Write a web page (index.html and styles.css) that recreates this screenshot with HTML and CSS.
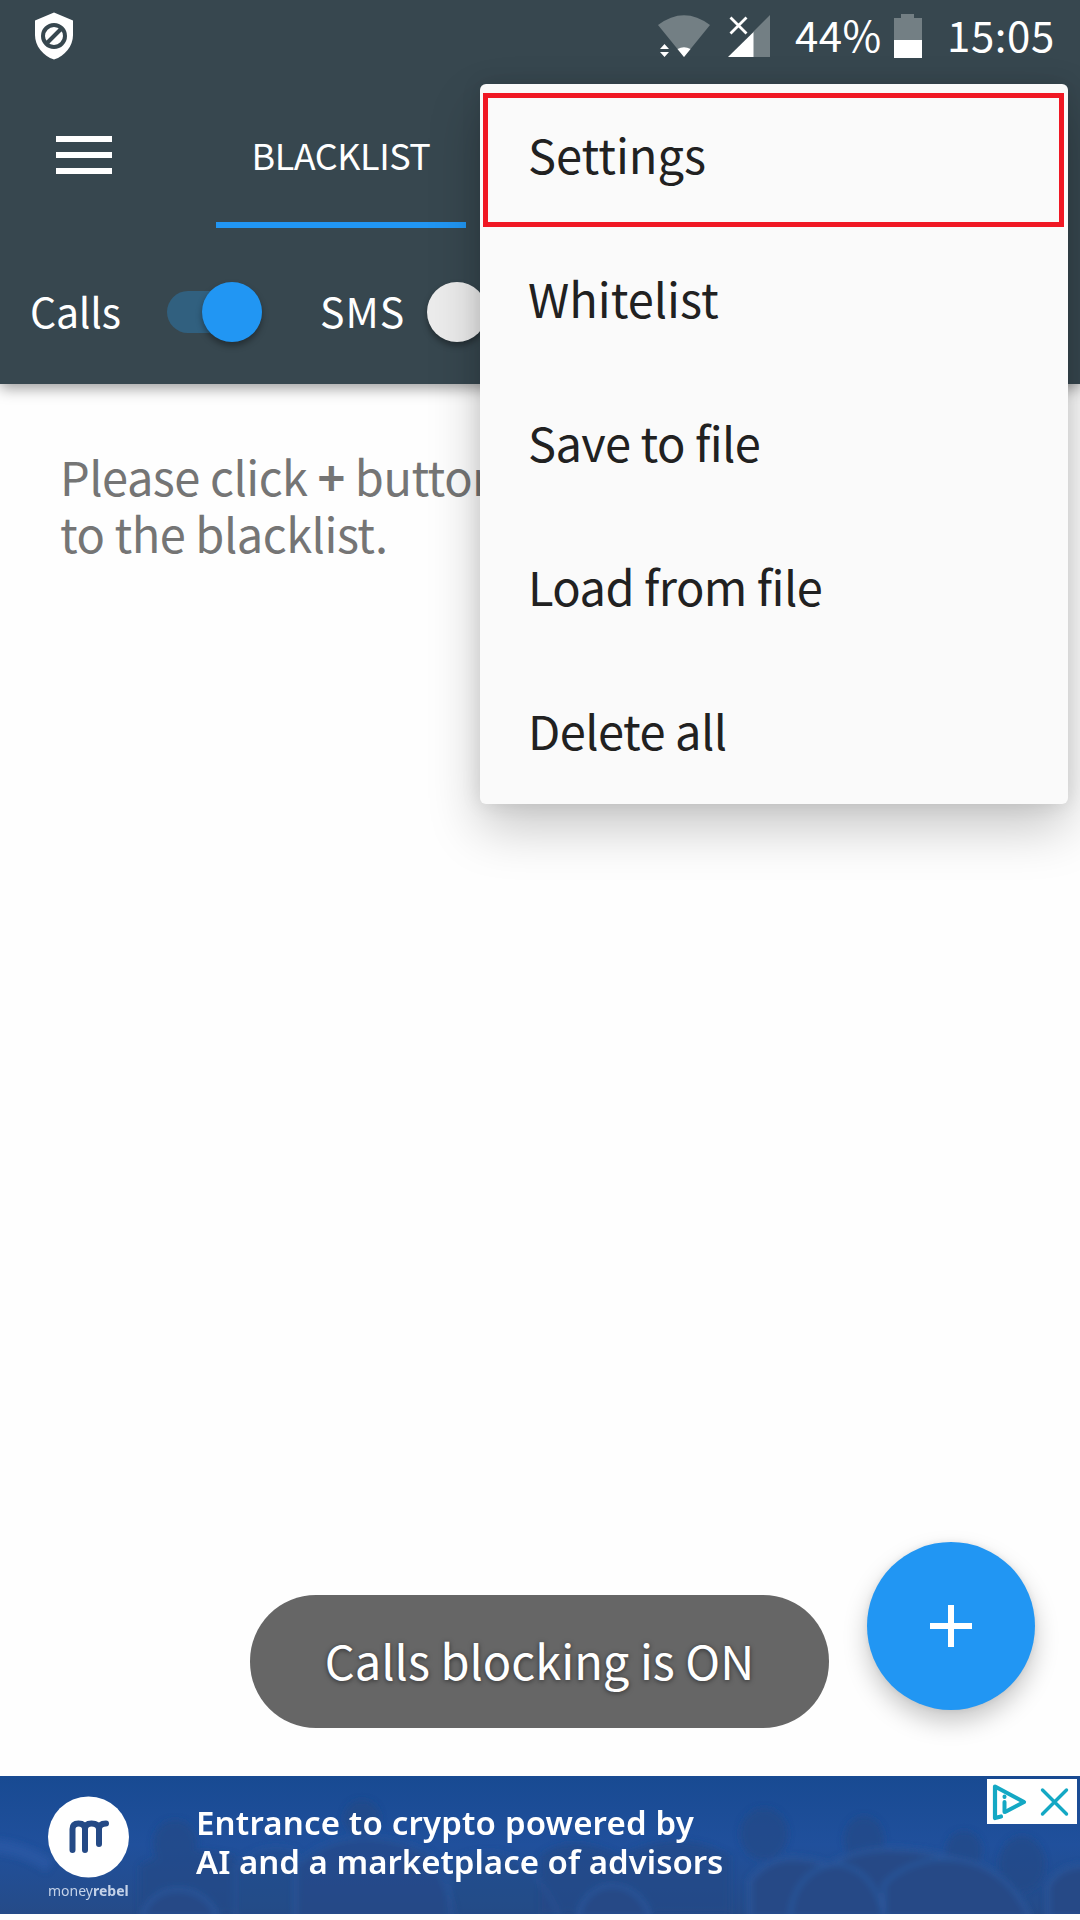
FILE: index.html
```html
<!DOCTYPE html>
<html lang="en">
<head>
<meta charset="utf-8">
<title>Blacklist</title>
<link rel="stylesheet" href="styles.css">
</head>
<body>
<div class="screen">
  <header class="header">
    <div class="status">
      <svg class="shield" width="38" height="48" viewBox="0 0 38 48">
        <path fill="#fff" d="M19 .5 38 8.500V23C38 34 30 44 19 47.500 8 44 0 34 0 23V8.500Z"/>
        <circle cx="19" cy="24" r="11" fill="none" stroke="#37474f" stroke-width="4"/>
        <path d="M11.500 31.500 26.500 16.500" stroke="#37474f" stroke-width="4"/>
      </svg>
      <svg class="wifi" width="52" height="42" viewBox="0 0 52 42">
        <path fill="#737f84" d="M0 10Q26-9.500 52 10L26 42Z"/>
        <path fill="#fff" d="M19.500 34Q26 30.500 32.500 34L26 42Z"/>
        <path fill="#fff" d="M2 34 6.500 29 11 34ZM2 37H11L6.500 42Z"/>
      </svg>
      <svg class="signal" width="42" height="42" viewBox="0 0 42 42">
        <path fill="#737f84" d="M42 0V42H25V17Z"/>
        <path fill="#fff" d="M0 42 25.500 17V42Z"/>
        <path d="M2.500 2.500 18.500 18.500M18.500 2.500 2.500 18.500" stroke="#fff" stroke-width="2.800"/>
      </svg>
      <span class="percent">44%</span>
      <svg class="battery" width="28" height="44" viewBox="0 0 28 44">
        <path fill="#737f84" d="M7 0H20V4H28V27H0V4H7Z"/>
        <path fill="#fff" d="M0 26H28V44H0Z"/>
      </svg>
      <span class="clock">15:05</span>
    </div>
    <nav class="appbar">
      <div class="burger"><i></i><i></i><i></i></div>
      <div class="tab">BLACKLIST</div>
    </nav>
    <div class="filters">
      <span class="label calls">Calls</span>
      <div class="switch on"><i class="thumb"></i></div>
      <span class="label sms">SMS</span>
      <div class="switch off"><i class="thumb"></i></div>
    </div>
  </header>

  <main class="content">
    <p class="hint">Please click <b>+</b> button<br>to the blacklist.</p>
    <div class="toast">Calls blocking is ON</div>
    <div class="fab">
      <svg width="42" height="42" viewBox="0 0 42 42"><path d="M21 0V42M0 21H42" stroke="#fff" stroke-width="6"/></svg>
    </div>
  </main>

  <footer class="ad">
    <svg class="crowd" width="1080" height="138" viewBox="0 0 1080 138" preserveAspectRatio="none">
      <defs>
        <linearGradient id="sky" x1="0" y1="0" x2="0" y2="1"><stop offset="0" stop-color="#184a92"/><stop offset=".5" stop-color="#20509c"/><stop offset="1" stop-color="#254b88"/></linearGradient>
        <filter id="soft" x="-10%" y="-20%" width="120%" height="140%"><feGaussianBlur stdDeviation="3"/></filter>
      </defs>
      <rect width="1080" height="138" fill="url(#sky)"/>
      <g filter="url(#soft)">
        <path d="M-10 70Q20 70 50 90" stroke="#2b5ca8" stroke-width="14" fill="none" opacity=".6"/>
        <g fill="#254986" opacity=".7">
          <ellipse cx="362" cy="42" rx="18" ry="18"/><ellipse cx="175" cy="68" rx="22" ry="24"/>
          <ellipse cx="764" cy="58" rx="24" ry="26"/><ellipse cx="864" cy="64" rx="20" ry="24"/>
          <ellipse cx="964" cy="74" rx="18" ry="19"/><ellipse cx="1022" cy="88" rx="23" ry="28"/>
          <path d="M140 138V90Q180 65 235 80V138ZM540 138V80Q570 55 620 80Q680 50 730 80V138Z"/>
        </g>
        <g fill="#254a86" stroke="#2a569b" stroke-width="4">
          <path d="M235 142V92Q260 65 295 75V142Z" opacity=".5"/>
          <path d="M295 142V90Q350 40 430 78Q450 115 455 142Z" opacity=".6"/>
          <path d="M450 142V88Q520 50 560 142Z" opacity=".5"/>
          <path d="M750 142V105Q775 70 830 90Q870 60 960 84V142Z"/>
          <path d="M790 142C792 108 812 90 836 88 862 90 880 112 884 142Z"/>
          <path d="M884 142V108C920 70 1000 70 1030 142Z"/>
          <path d="M1048 142V110Q1060 88 1090 90V142Z"/>
          <path d="M142 142C150 104 205 104 218 142ZM578 142C585 98 640 100 650 142Z"/>
        </g>
      </g>
    </svg>
    <div class="brand">
      <svg width="82" height="82" viewBox="0 0 82 82">
        <circle cx="40.500" cy="41" r="40.500" fill="#fff"/>
        <path d="M24.500 54V33Q24.500 27.500 30.500 27.500 37 27.500 37 33V54M37 33Q37 27.500 43.500 27.500 50.500 27.500 51 33V48M51 33Q51 27.500 58 27.500" fill="none" stroke="#254a86" stroke-width="6" stroke-linecap="round" stroke-linejoin="round"/>
      </svg>
      <div class="brandname">money<b>rebel</b></div>
    </div>
    <p class="adtext"><span class="lead">Entrance to crypto powered by</span><br>AI and a marketplace of advisors</p>
    <div class="choices">
      <svg width="90" height="45" viewBox="0 0 90 45" fill="none" stroke="#14a8c4" stroke-linecap="round" stroke-linejoin="round">
        <path d="M14 37.500 8 39V7.500L37 23 19 32.500" stroke-width="4.200"/>
        <path d="M17.500 23V33M17.500 17.500V18" stroke-width="4"/>
        <path d="M55.500 11 79.500 35M79.500 11 55.500 35" stroke-width="3.400"/>
      </svg>
    </div>
  </footer>

  <div class="menu">
    <div class="item current">Settings</div>
    <div class="item">Whitelist</div>
    <div class="item tight">Save to file</div>
    <div class="item tight">Load from file</div>
    <div class="item tight">Delete all</div>
  </div>
</div>
</body>
</html>
```
FILE: styles.css
```css
*, *::after { box-sizing: border-box; }
body {
  margin: 0;
  background: #fefefe;
  font-family: "Noto Sans CJK SC", "Noto Sans", sans-serif;
}
.screen {
  position: relative;
  width: 1080px;
  height: 1920px;
  overflow: hidden;
  display: flex;
  flex-direction: column;
}
.header {
  height: 384px;
  background: #37474f;
  color: #fff;
  box-shadow: 0 4px 14px rgba(0, 0, 0, .4);
  flex: none;
}
.status {
  height: 72px;
  display: flex;
  align-items: flex-start;
  padding: 12px 0 0 35px;
  line-height: 43px;
  font-size: 42px;
  white-space: nowrap;
}
.wifi { margin: 3px 18px 0 585px; }
.signal { margin: 3px 25px 0 0; }
.percent { width: 99px; letter-spacing: .4px; }
.battery { margin: 2px 25px 0 0; }
.clock { letter-spacing: .6px; }
.appbar {
  display: flex;
  height: 156px;
}
.burger {
  width: 56px;
  height: 38px;
  margin: 64px 104px 0 56px;
  display: flex;
  flex-direction: column;
  justify-content: space-between;
}
.burger i { height: 6px; background: #fff; }
.tab {
  width: 250px;
  border-bottom: 6px solid #2196f3;
  text-align: center;
  font-size: 36px;
  letter-spacing: -.5px;
  line-height: 48px;
  padding-top: 58px;
}
.filters {
  display: flex;
  align-items: center;
  height: 168px;
  padding: 0 0 1px 30px;
  font-size: 41px;
}
.label { line-height: 60px; padding-bottom: 4px; }
.calls { width: 137px; letter-spacing: -.2px; }
.sms { width: 107px; letter-spacing: 1px; }
.switch {
  width: 95px;
  height: 42px;
  border-radius: 21px;
  display: flex;
  align-items: center;
}
.on { background: #31607f; margin-right: 58px; }
.on .thumb { margin-left: auto; background: #2196f3; }
.off .thumb { background: #ececec; }
.thumb {
  width: 60px;
  height: 60px;
  border-radius: 50%;
  box-shadow: 0 4px 6px rgba(0, 0, 0, .35);
}
.content {
  flex: 1;
  position: relative;
}
.hint {
  margin: 0;
  padding: 63px 0 0 60px;
  font-size: 47px;
  letter-spacing: -.5px;
  line-height: 57px;
  color: #757575;
  white-space: nowrap;
}
.toast {
  position: absolute;
  left: 250px;
  top: 1211px;
  width: 579px;
  height: 133px;
  border-radius: 66px;
  background: #666;
  color: #fff;
  font-size: 47px;
  line-height: 129px;
  text-align: center;
  white-space: nowrap;
  text-shadow: 0 1px 5px rgba(0, 0, 0, .55);
}
.fab {
  position: absolute;
  left: 867px;
  top: 1158px;
  width: 168px;
  height: 168px;
  border-radius: 50%;
  background: #2196f3;
  display: flex;
  align-items: center;
  justify-content: center;
  box-shadow: 0 12px 24px rgba(0, 0, 0, .22), 0 0 6px rgba(0, 0, 0, .08);
}
.ad {
  position: relative;
  height: 138px;
  margin-bottom: 6px;
  display: flex;
  align-items: flex-start;
  color: #fff;
}
.crowd { position: absolute; left: 0; top: 0; }
.brand { position: relative; margin: 20px 0 0 48px; width: 148px; }
.brand svg { display: block; }
.brandname {
  font: 14px/20px "Noto Sans", sans-serif;
  margin-top: 3px;
  color: #c4d2e8;
}
.adtext {
  position: relative;
  margin: 27px 0 0;
  font: 600 33px/39px "Noto Sans", sans-serif;
  white-space: nowrap;
}
.lead { letter-spacing: .17px; }
.choices {
  position: absolute;
  right: 3px;
  top: 3px;
  width: 90px;
  height: 45px;
  background: #fff;
}
.menu {
  position: absolute;
  left: 480px;
  top: 84px;
  width: 588px;
  height: 720px;
  border-radius: 6px;
  background: #fafafa;
  box-shadow: 0 24px 52px rgba(0, 0, 0, .22), 0 0 20px rgba(0, 0, 0, .1);
  color: #212121;
  font-size: 47px;
}
.item {
  position: relative;
  height: 144px;
  line-height: 140px;
  padding-left: 48px;
  white-space: nowrap;
}
.tight { letter-spacing: -.55px; }
.current::after {
  content: "";
  position: absolute;
  left: 3px;
  top: 9px;
  width: 581px;
  height: 134px;
  border: 5px solid #f01824;
}
```
